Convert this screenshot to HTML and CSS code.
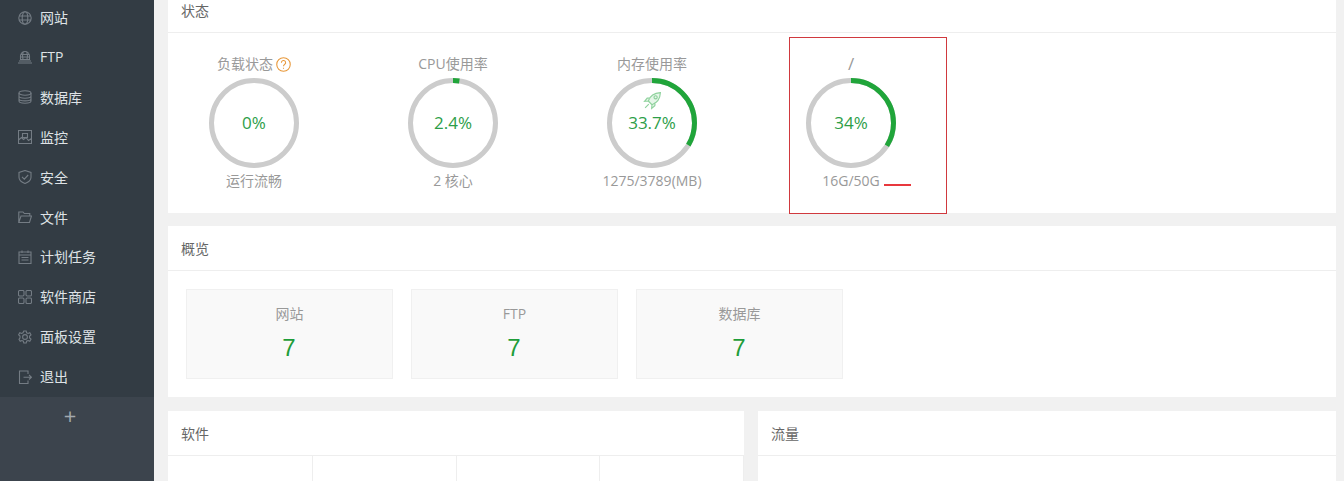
FILE: index.html
```html
<!DOCTYPE html>
<html lang="zh-CN">
<head>
    <meta charset="UTF-8">
    <title>面板首页</title>
    <link rel="stylesheet" href="styles.css">
</head>
<body>
    <aside class="sidebar">
        <ul class="menu">
            <li><svg viewBox="0 0 14 14"><circle cx="7" cy="7" r="6.200"/><ellipse cx="7" cy="7" rx="2.800" ry="6.200"/><path d="M1 5h12M1 9h12"/></svg>网站</li>
            <li><svg viewBox="0 0 14 14"><path d="M2.500 9.500V6a4.500 4.500 0 0 1 9 0v3.500zM5.200 1.800Q4 5.500 5 9.500M8.800 1.800Q10 5.500 9 9.500M2.500 4.500h9M2.500 7h9M1 11h12M0 13h14"/></svg>FTP</li>
            <li><svg viewBox="0 0 14 14"><ellipse cx="7" cy="3" rx="6" ry="2.200"/><path d="M1 3v8c0 1.200 2.700 2.200 6 2.200s6-1 6-2.200V3M1 6c0 1.200 2.700 2.200 6 2.200s6-1 6-2.200M1 8.700c0 1.200 2.700 2.200 6 2.200s6-1 6-2.200"/></svg>数据库</li>
            <li><svg viewBox="0 0 14 14"><path d="M.5.5h13v13H.5zM4.500 3.500h5v4h-5zM.5 10l3-2.500 2 2 2.500-2 2.500 3 3-2"/></svg>监控</li>
            <li><svg viewBox="0 0 14 14"><path d="M7 .5l6 2v4.800c0 3-2.600 5-6 6.200-3.400-1.200-6-3.200-6-6.200V2.500zM4 6.800l2.300 2.300L10.200 5"/></svg>安全</li>
            <li><svg viewBox="0 0 14 14"><path d="M.8 12.500V2h4.200l1.300 1.500h5.500V6M.8 12.500h10.700L13.500 6H3z"/></svg>文件</li>
            <li><svg viewBox="0 0 14 14"><path d="M1 2h12v11.500H1zM4 .5v2.500M10 .5V3M1 5h12M3.500 7.500h7M3.500 10h7"/></svg>计划任务</li>
            <li><svg viewBox="0 0 14 14"><rect x=".5" y=".5" width="5.500" height="5.500" rx="1.200"/><rect x="8" y=".5" width="5.500" height="5.500" rx="1.200"/><rect x=".5" y="8" width="5.500" height="5.500" rx="1.200"/><rect x="8" y="8" width="5.500" height="5.500" rx="1.200"/></svg>软件商店</li>
            <li><svg viewBox="0 0 14 14"><path d="M5.800 1h2.400l.4 1.800 1.500.7 1.700-.8 1.200 2.100-1.400 1.200v2l1.400 1.200-1.200 2.100-1.700-.8-1.500.7-.4 1.800H5.800l-.4-1.800-1.500-.7-1.700.8-1.200-2.100L2 8V6L.6 4.800l1.200-2.100 1.700.8 1.500-.7z"/><circle cx="7" cy="7" r="2.400"/></svg>面板设置</li>
            <li><svg viewBox="0 0 14 14"><path d="M10 4V1H1.500v12.500H10v-3M5.500 7.200h8M11 5l2.500 2.200L11 9.500"/></svg>退出</li>
        </ul>
        <div class="menu-add">+</div>
    </aside>
    <main class="main">
        <section class="card status-card">
            <h2 class="card-title">状态</h2>
            <div class="gauges">
                <div class="gauge">
                    <p class="gauge-label">负载状态 <svg class="help" viewBox="0 0 14 14"><circle cx="7" cy="7" r="6.300"/><path d="M5 5.300a2 2 0 1 1 3 1.700c-.7.400-1 .8-1 1.700M7 10v1"/></svg></p>
                    <div class="ring">
                        <svg viewBox="0 0 90 90"><circle class="ring-track" cx="45" cy="45" r="42.500"/></svg>
                        <span class="ring-value">0%</span>
                    </div>
                    <p class="gauge-note">运行流畅</p>
                </div>
                <div class="gauge">
                    <p class="gauge-label">CPU使用率</p>
                    <div class="ring">
                        <svg viewBox="0 0 90 90"><circle class="ring-track" cx="45" cy="45" r="42.500"/><circle class="ring-bar" cx="45" cy="45" r="42.500" pathLength="100" stroke-dasharray="2.400 100"/></svg>
                        <span class="ring-value">2.4%</span>
                    </div>
                    <p class="gauge-note">2 核心</p>
                </div>
                <div class="gauge">
                    <p class="gauge-label">内存使用率</p>
                    <div class="ring">
                        <svg viewBox="0 0 90 90"><circle class="ring-track" cx="45" cy="45" r="42.500"/><circle class="ring-bar" cx="45" cy="45" r="42.500" pathLength="100" stroke-dasharray="33.700 100"/></svg>
                        <svg class="rocket" viewBox="0 0 18 18"><path d="M5 9.500C6.500 5 10.500 1.800 16.500 1.500 16.200 7.500 13 11.500 8.500 13zM5 9.500L1.500 9.800 4 6.800 7 6.500M8.500 13l-.3 3.500 3-2.500.3-3M5.500 12.500L2 16M12 4.500a1.500 1.500 0 1 1-.1 0z"/></svg>
                        <span class="ring-value">33.7%</span>
                    </div>
                    <p class="gauge-note">1275/3789(MB)</p>
                </div>
                <div class="gauge">
                    <p class="gauge-label gauge-path">/</p>
                    <div class="ring">
                        <svg viewBox="0 0 90 90"><circle class="ring-track" cx="45" cy="45" r="42.500"/><circle class="ring-bar" cx="45" cy="45" r="42.500" pathLength="100" stroke-dasharray="34 100"/></svg>
                        <span class="ring-value">34%</span>
                    </div>
                    <p class="gauge-note">16G/50G</p>
                </div>
            </div>
            <div class="mark-box"></div>
            <div class="mark-line"></div>
        </section>

        <section class="card overview-card">
            <h2 class="card-title">概览</h2>
            <div class="tiles">
                <div class="tile"><p class="tile-label">网站</p><p class="tile-num">7</p></div>
                <div class="tile"><p class="tile-label">FTP</p><p class="tile-num">7</p></div>
                <div class="tile"><p class="tile-label">数据库</p><p class="tile-num">7</p></div>
            </div>
        </section>

        <div class="columns">
            <section class="card soft-card">
                <h2 class="card-title">软件</h2>
                <div class="soft-grid">
                    <div class="soft-cell"></div>
                    <div class="soft-cell"></div>
                    <div class="soft-cell"></div>
                    <div class="soft-cell"></div>
                </div>
            </section>
            <section class="card flow-card">
                <h2 class="card-title">流量</h2>
            </section>
        </div>
    </main>
</body>
</html>
```

FILE: styles.css
```css
* {
    box-sizing: border-box;
}
html, body {
    height: 100%;
}
body {
    margin: 0;
    display: flex;
    overflow: hidden;
    background-color: #f1f1f1;
    color: #666666;
    font-family: "Open Sans", "Noto Sans CJK SC", sans-serif;
    font-size: 14px;
}
p, h2, ul {
    margin: 0;
    padding: 0;
}
.sidebar {
    flex: 0 0 154px;
    display: flex;
    flex-direction: column;
    background-color: #3c444d;
}
.menu {
    list-style-type: none;
    margin-top: -2.850px;
    padding-bottom: 0.850px;
    background-color: #333c44;
}
.menu li {
    display: flex;
    align-items: center;
    gap: 8px;
    height: 39.9px;
    padding-left: 18px;
    color: #dfe3e6;
}
.menu svg {
    width: 14px;
    height: 14px;
    margin-top: 1px;
    fill: none;
    stroke: #747c84;
    stroke-width: 1.100;
}
.menu-add {
    height: 38px;
    line-height: 36px;
    padding-right: 14px;
    text-align: center;
    color: #a3a9ae;
    font-size: 22px;
}
.main {
    flex: 1;
    min-width: 0;
    margin-top: -12px;
    padding: 0 8px 0 14px;
    overflow: hidden;
}
.card {
    background-color: #ffffff;
}
.card-title {
    height: 45px;
    line-height: 45px;
    padding-left: 13px;
    border-bottom: 1px solid #eeeeee;
    font-size: 14px;
    font-weight: 400;
    color: #666666;
}
.status-card {
    position: relative;
    height: 225px;
}
.gauges {
    display: flex;
    gap: 59px;
    padding: 19px 0 0 16px;
}
.gauge {
    width: 140px;
    text-align: center;
    color: #999999;
}
.gauge-label {
    display: flex;
    align-items: center;
    justify-content: center;
    gap: 3px;
    height: 24px;
    line-height: 24px;
    margin-bottom: 2px;
}
.gauge-path {
    font-size: 17px;
}
.help {
    width: 15px;
    height: 15px;
    fill: none;
    stroke: #e8983a;
    stroke-width: 1;
}
.ring {
    position: relative;
    width: 90px;
    height: 90px;
    margin: 0 auto;
}
.ring > svg:first-child {
    display: block;
    width: 90px;
    height: 90px;
    transform: rotate(-90deg);
}
.ring circle {
    fill: none;
    stroke-width: 5;
}
.ring-track {
    stroke: #cccccc;
}
.ring-bar {
    stroke: #20a53a;
}
.ring-value {
    position: absolute;
    left: 0;
    right: 0;
    top: 33px;
    line-height: 24px;
    font-size: 17px;
    color: #2d9e48;
}
.rocket {
    position: absolute;
    left: 36px;
    top: 13px;
    width: 19px;
    height: 19px;
    fill: #e6f6e9;
    stroke: #8fd29d;
    stroke-width: 1.100;
}
.gauge-note {
    height: 26px;
    line-height: 26px;
}
.mark-box {
    position: absolute;
    left: 621px;
    top: 49px;
    width: 158px;
    height: 177px;
    border: 1px solid #d0393e;
}
.mark-line {
    position: absolute;
    left: 716px;
    top: 196px;
    width: 27px;
    height: 2px;
    background-color: #e8383d;
}
.overview-card {
    margin-top: 13px;
    height: 171px;
}
.tiles {
    display: flex;
    gap: 18px;
    padding: 18px;
}
.tile {
    width: 207px;
    height: 90px;
    border: 1px solid #f0f0f0;
    background-color: #f9f9f9;
    text-align: center;
}
.tile-label {
    margin-top: 14px;
    line-height: 20px;
    color: #999999;
}
.tile-num {
    margin-top: 9px;
    padding-right: 1px;
    line-height: 30px;
    font-family: "Liberation Sans", sans-serif;
    font-size: 24px;
    color: #1f9d3a;
}
.columns {
    display: flex;
    gap: 14px;
    margin-top: 14px;
}
.soft-card {
    width: 576px;
    height: 300px;
}
.flow-card {
    flex: 1;
    height: 300px;
}
.soft-grid {
    display: flex;
    padding-left: 1px;
}
.soft-cell {
    width: 144px;
    height: 200px;
    border-right: 1px solid #eeeeee;
}
```
